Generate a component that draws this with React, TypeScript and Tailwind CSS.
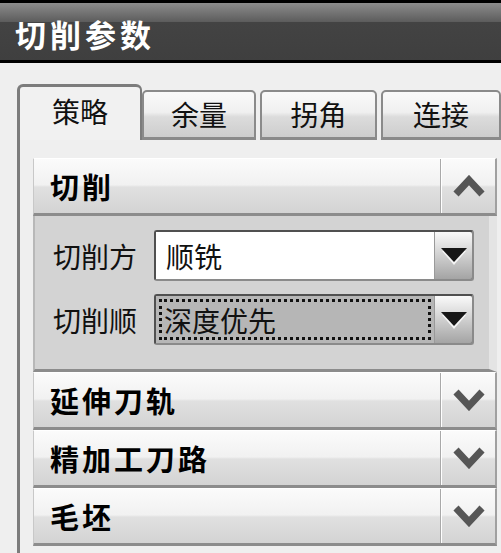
const FONT = "font-['Noto_Sans_CJK_SC','Noto_Sans',sans-serif]";

function Chevron({ up }: { up?: boolean }) {
  return (
    <svg width="32" height="22" viewBox="0 0 32 22" className="block">
      <path
        d={up ? 'M3 19 L16 5 L29 19' : 'M3 3 L16 17 L29 3'}
        fill="none"
        stroke="#565656"
        strokeWidth="7"
        strokeLinejoin="miter"
      />
    </svg>
  );
}

function SectionHeader({ title, up }: { title: string; up?: boolean }) {
  return (
    <div className="flex h-[58px] border-b-[3px] border-[#8c8c8c] border-t border-t-white border-l border-l-[#c8c8c8] border-r-2 border-r-[#a0a0a0] bg-[linear-gradient(to_bottom,#fbfbfb,#f1f1f1_48%,#e0e0e0_52%,#d3d3d3)]">
      <div className="flex flex-1 items-center pl-[16px] text-[29px] font-bold tracking-[3px] text-black leading-none">
        {title}
      </div>
      <div className="w-[2px] bg-[#a9a9a9] border-r border-white" />
      <div className="flex w-[53px] items-center justify-center">
        <Chevron up={up} />
      </div>
    </div>
  );
}

function Dropdown({ value, focused }: { value: string; focused?: boolean }) {
  return (
    <div className="flex h-[51px] w-[320px] rounded-[3px] border-2 border-t-[#505050] border-l-[#505050] border-b-[#8a8a8a] border-r-[#8a8a8a] bg-[#7a7a7a]">
      <div className={focused ? 'flex flex-1 p-[3px] bg-[#b6b6b6]' : 'flex flex-1 bg-white'}>
        <div
          className={
            focused
              ? 'flex flex-1 items-center border-[3px] border-dotted border-[#111] pl-[2px] text-[28px] leading-none text-[#111]'
              : 'flex flex-1 items-center pl-[10px] text-[28px] leading-none text-[#111]'
          }
        >
          {value}
        </div>
      </div>
      <div className="flex w-[38px] items-center justify-center border-l border-[#9a9a9a] bg-[linear-gradient(to_bottom,#fafafa,#d8d8d8_40%,#a4a4a4)] rounded-r-[2px]">
        <svg width="30" height="22" viewBox="0 0 30 22">
          <path d="M3 6 L27 6 L15 20 Z" fill="#fff" opacity="0.8" />
          <path d="M2 3 L28 3 L15 17 Z" fill="#161616" />
        </svg>
      </div>
    </div>
  );
}

function Tab({ label, active, w }: { label: string; active?: boolean; w: string }) {
  if (active) {
    return (
      <div
        className={`${w} flex h-[56px] items-start justify-center rounded-t-[6px] border-l-[3px] border-t-[3px] border-r-2 border-[#7c7c7c] bg-[#f1f1f1] pt-[10px] text-[28px] leading-none text-[#111]`}
      >
        策略
      </div>
    );
  }
  return (
    <div
      className={`${w} flex h-[50px] shrink-0 items-center justify-center rounded-t-[5px] border-2 border-b-[3px] border-[#8a8a8a] bg-[linear-gradient(to_bottom,#f9f9f9,#f0f0f0_45%,#dcdcdc_55%,#cdcdcd)] pb-[2px] text-[28px] leading-none text-[#111]`}
    >
      {label}
    </div>
  );
}

export default function App() {
  return (
    <div className={`${FONT} h-[553px] w-[501px] overflow-hidden bg-[#efefef]`}>
      <div className="flex h-[63px] items-center border-t-[3px] border-b-[3px] border-black bg-[linear-gradient(to_bottom,#8c8c8c,#5c5c5c_19px,#434343_19px,#3f3f3f)] pl-[15px] pt-[3px]">
        <span className="text-[31px] font-bold leading-none tracking-[4px] text-white">切削参数</span>
      </div>

      <div className="pl-[17px] pt-[21px]">
        <div className="flex items-end">
          <Tab label="策略" active w="w-[130px]" />
          <Tab label="余量" w="w-[114px]" />
          <div className="w-[4px] shrink-0" />
          <Tab label="拐角" w="w-[117px]" />
          <div className="w-[4px] shrink-0" />
          <Tab label="连接" w="w-[120px]" />
        </div>

        <div className="h-[420px] border-l-[3px] border-[#7c7c7c] pl-[13px] pt-[18px]">
          <div className="w-[464px]">
            <SectionHeader title="切削" up />
            <div className="flex h-[156px] flex-col gap-[13px] border-l-2 border-[#b8b8b8] border-b-[3px] border-b-[#8c8c8c] border-r-[8px] border-r-[#e4e4e4] bg-[#d3d3d3] pl-[18px] pt-[14px]">
              <div className="flex items-center">
                <span className="w-[101px] text-[28px] leading-none text-[#111]">切削方</span>
                <Dropdown value="顺铣" />
              </div>
              <div className="flex items-center">
                <span className="w-[101px] text-[28px] leading-none text-[#111]">切削顺</span>
                <Dropdown value="深度优先" focused />
              </div>
            </div>
            <SectionHeader title="延伸刀轨" />
            <SectionHeader title="精加工刀路" />
            <SectionHeader title="毛坯" />
          </div>
        </div>
      </div>
    </div>
  );
}
